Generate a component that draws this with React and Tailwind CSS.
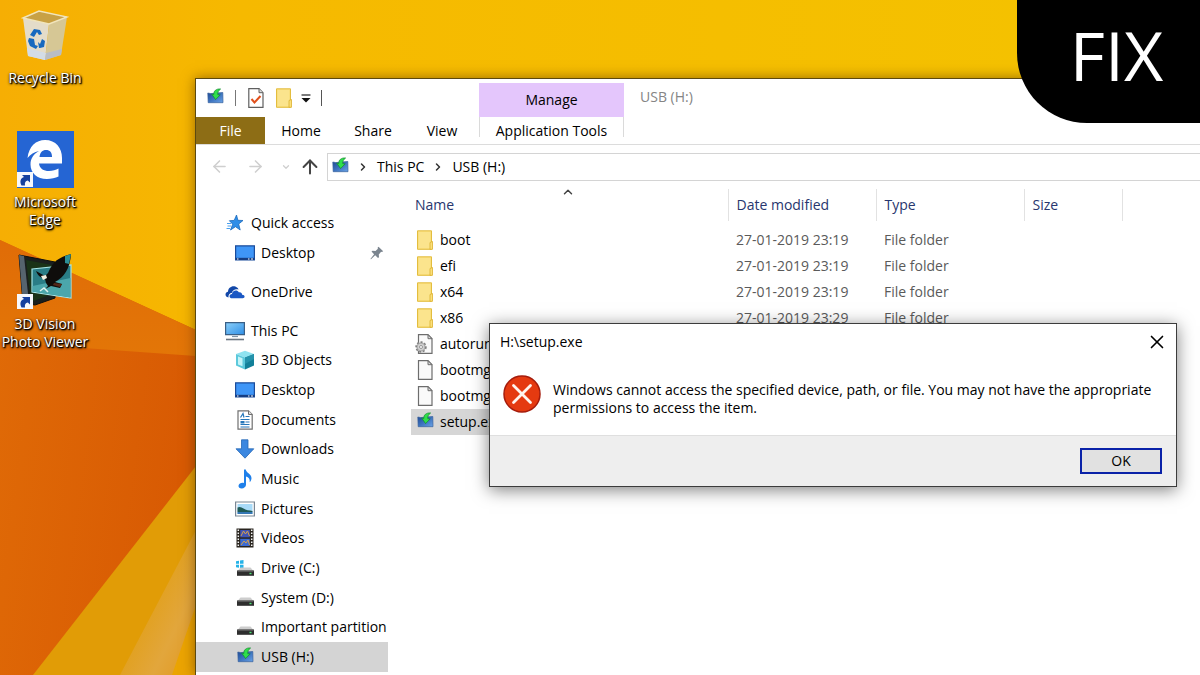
import { X, ArrowLeft, ArrowRight, ArrowUp, ChevronDown, ChevronRight, ChevronUp } from "lucide-react";

/* ---------- Small icons ---------- */

const SetupIcon = () => (
  <svg viewBox="0 0 17 20" className="w-[17px] h-5 shrink-0">
    <defs>
      <linearGradient id="setup" x1="0" y1="0" x2="1" y2="1">
        <stop offset="0" stopColor="#1f4a94" />
        <stop offset=".5" stopColor="#3d73bf" />
        <stop offset="1" stopColor="#6aa3e6" />
      </linearGradient>
    </defs>
    <path d="M.8 5l3 .6 12-1.100.2 10.200H1.200z" fill="url(#setup)" stroke="#3a629c" strokeWidth=".7" />
    <path d="M13.600 1C9 .6 6.600 3 6.800 6.500L4.600 6l4 5.600L13.200 6.800l-2.400-.1C10.600 4.200 11.400 2.600 13.600 1z" fill="#2fdf4b" stroke="#138a2b" strokeWidth=".7" />
  </svg>
);

const FolderIcon = () => (
  <svg viewBox="0 0 17 20" className="w-[17px] h-5 shrink-0">
    <path d="M.5.8h14v18.500H.5z" fill="#f9df7e" stroke="#e3bd3e" />
    <path d="M2 2h11v16H2z" fill="#fbe48d" />
    <path d="M13 12.500l2.500-1v7.800h-2.500z" fill="#fbe07a" stroke="#dcb02e" strokeWidth=".8" />
  </svg>
);

const FileIcon = () => (
  <svg viewBox="0 0 17 20" className="w-[17px] h-5 shrink-0">
    <path d="M1.500.7h9.500l4 4v14.600H1.500z" fill="#fafafa" stroke="#6d6d6d" strokeWidth="1.200" />
    <path d="M11 .7v4h4z" fill="#d8d8d8" stroke="#6d6d6d" />
  </svg>
);

const GearFileIcon = () => (
  <svg viewBox="-2 0 19 20" className="w-[19px] h-5 -ml-0.5 shrink-0">
    <path d="M1.500.7h9.500l4 4v14.600H1.500z" fill="#fafafa" stroke="#6d6d6d" strokeWidth="1.200" />
    <path d="M11 .7v4h4z" fill="#d8d8d8" stroke="#6d6d6d" />
    <circle cx="4" cy="13" r="4.800" fill="#c9c9c9" stroke="#808080" strokeWidth="1.800" strokeDasharray="2 1.600" />
    <circle cx="4" cy="13" r="3.900" fill="#d2d2d2" stroke="#909090" strokeWidth=".6" />
    <circle cx="4" cy="13" r="1.500" fill="#fff" stroke="#777" strokeWidth=".7" />
  </svg>
);

const PropertiesIcon = () => (
  <svg viewBox="0 0 16 20" className="w-4 h-5">
    <path d="M.8.7h10.200l4 4v14.600H.8z" fill="#fff" stroke="#5f5f5f" strokeWidth="1.200" />
    <path d="M11 .7v4h4" fill="#ddd" stroke="#5f5f5f" />
    <path d="M3.500 11l3 3.500 6-6.500" fill="none" stroke="#e0501c" strokeWidth="2" />
  </svg>
);

const StarIcon = () => (
  <svg viewBox="0 0 18 18" className="w-[18px] h-[18px]">
    <path d="M10.500 1l1.400 5.300 5.100.2-4.300 3.500 1.500 6-4.700-3.300-5 3.300 2.200-5.800L3.400 6.700l4.800-.3z" fill="#2f8ee8" stroke="#1a69bd" strokeWidth=".8" />
    <path d="M1 9.500h4M1.500 12h3.500M.5 14.500h3.500" stroke="#4aa0ee" />
  </svg>
);

const DesktopIcon = () => (
  <svg viewBox="0 0 20 16" className="w-5 h-4">
    <path d="M.6.8h18.800v14.200H.6z" fill="#3f96f7" stroke="#1b4c9b" strokeWidth="1.200" />
    <path d="M.6 12.800h18.800v2.200H.6z" fill="#163e83" />
    <path d="M2 14h1.500M13 14h1.500M16 14h2" stroke="#fff" />
  </svg>
);

const OneDriveIcon = () => (
  <svg viewBox="0 0 20 14" className="w-5 h-3.5">
    <path d="M3.500 12.500C-.5 12-.3 7.200 3 6.800 3 2 8.500-.5 12 2.500c1 .8 1.300 1.500 1.500 2-3-1-6 .5-6.500 3.300-3 .4-3.800 3-3.500 4.700z" fill="#1247a8" />
    <path d="M6 13.200c-2.300-.6-1.800-4.200 1-4.300.2-3.700 5.400-4.700 6.800-1.600 2-.5 3.400.7 3.300 2.400 3.400.1 3 3.600.6 3.600z" fill="#1b58c4" />
  </svg>
);

const ComputerIcon = () => (
  <svg viewBox="0 0 20 20" className="w-5 h-5">
    <defs>
      <linearGradient id="screen" x1="0" y1="0" x2="1" y2="1">
        <stop offset="0" stopColor="#8cd0fa" />
        <stop offset="1" stopColor="#2f8fe6" />
      </linearGradient>
    </defs>
    <path d="M.6 1.600h18.800v12H.6z" fill="url(#screen)" stroke="#3a5f86" strokeWidth="1.200" />
    <path d="M7 15.500h6" stroke="#7d93a8" strokeWidth="1.200" />
    <path d="M1 18.500h18" stroke="#6c7782" strokeWidth="1.600" />
  </svg>
);

const CubeIcon = () => (
  <svg viewBox="0 0 20 20" className="w-5 h-5">
    <path d="M10 .8l9 3.200-9 3.500L1 4z" fill="#8fe3f0" />
    <path d="M1 4l9 3.500v12L1 15.500z" fill="#5cc9dc" />
    <path d="M3 6.500l4.500 1.800v8L3 14.500z" fill="#c5f4f8" />
    <path d="M10 7.500L19 4v11.500l-9 4z" fill="#128099" />
    <path d="M10 7.500L19 4v5l-9 5z" fill="#2492ab" />
  </svg>
);

const DocumentIcon = () => (
  <svg viewBox="0 0 18 20" className="w-[18px] h-5">
    <path d="M2 .8h10.500l3.700 3.700v14.700H2z" fill="#fff" stroke="#707070" strokeWidth="1.200" />
    <path d="M12.500.8v3.700h3.700" fill="#ddd" stroke="#707070" />
    <path d="M4.500 7.500L7 3.500l1 4M9.500 6.500h4M4.500 9.500h9M9.500 12h4M4.500 14.500h9M4.500 17h9" stroke="#2677ba" strokeWidth="1.200" fill="none" />
    <path d="M4.500 11h4v2.500h-4z" fill="#2677ba" />
  </svg>
);

const DownloadIcon = () => (
  <svg viewBox="0 0 20 20" className="w-5 h-5">
    <path d="M6.500 .8h6.500v9h5.800L10 19.200 1 9.800h5.500z" fill="#3b87e0" stroke="#2467b5" strokeWidth=".8" />
  </svg>
);

const MusicIcon = () => (
  <svg viewBox="0 0 18 20" className="w-[18px] h-5">
    <path d="M8 .5h1.800c.4 3.500 5.800 4.500 5.700 8.700 0 1.500-.8 3-1.800 4 .5-4-2-5.200-3.700-5.700v8.300c0 2-2 3.700-4.300 3.700-2 0-3.400-1.200-3.200-2.700.3-2.300 3-3.600 5.500-2.900z" fill="#1f80ea" />
  </svg>
);

const PictureIcon = () => (
  <svg viewBox="0 0 20 16" className="w-5 h-4">
    <path d="M.6 1h18.800v14H.6z" fill="#fff" stroke="#7a8794" strokeWidth="1.200" />
    <path d="M2.500 3h15v10h-15z" fill="#a9dbf8" />
    <path d="M2.500 6.500c2-1 4-.5 6 1s6 2 9 2.500v1h-15z" fill="#1f5a55" />
    <path d="M2.500 11h15v2h-15z" fill="#3577b4" />
  </svg>
);

const VideoIcon = () => (
  <svg viewBox="0 0 18 20" className="w-[18px] h-5">
    <path d="M.5.5h17v19H.5z" fill="#29241e" />
    <path d="M4.200 2h9.600v7.300H4.200z" fill="#4054b5" />
    <path d="M4.200 10.800h9.600V18H4.200z" fill="#3c6bd2" />
    <path d="M5 8l2.500-5 2 3 2-3 2 5M5 17l3-4 2 2 2-3 1.500 5" stroke="#d8a04a" fill="none" />
    <path d="M2.300 1.500v17.500M15.700 1.500v17.500" stroke="#f5f5f5" strokeWidth="1.500" strokeDasharray="1.500 1.500" />
  </svg>
);

const DriveIcon = ({ windows }) => (
  <svg viewBox="0 0 20 18" className="w-5 h-[18px]">
    {windows && <path d="M1 2.200l3-.5v3H1zM5 1.500L8.500 1v3.700H5zM1 5.800h3v3l-3-.5zM5 5.800h3.500v3.500L5 8.900z" fill="#25b3e8" />}
    <path d="M5.500 8.500h10L18.500 12h-16z" fill="#cdcdcd" />
    <path d="M2 11.500h17v5.300H2z" fill="#2e2e2e" />
    <path d="M2.500 12.200h16" stroke="#666" />
    <path d="M14.500 14.500h2" stroke="#4ce477" strokeWidth="1.400" />
  </svg>
);

const PinIcon = () => (
  <svg viewBox="0 0 14 14" className="w-3.5 h-3.5">
    <path d="M8.500.8l4.700 4.500-1.300.7-.8-.2-2.300 2.600.2 2.800-1 .9-2.800-2.800L1 13.300l-.6-.4 3.700-4.700L1.500 5.600l1-.9 3 .2 2.400-2.200-.3-1z" fill="#7b858f" />
  </svg>
);

/* ---------- Desktop icons ---------- */

const ShortcutArrow = () => (
  <g>
    <path d="M0 41h16v15H0z" fill="#f6f8fc" />
    <path d="M4.500 54.500c-2-4 -1-7.500 2.500-8.500L5 44h8v7.500l-2.200-2C8.500 50 7.500 51.500 8 54.500z" fill="#14409f" />
  </g>
);

const RecycleBinIcon = () => (
  <svg viewBox="0 0 48 54" className="w-12 h-[54px]">
    <path d="M2 8l26 6-4 36L7 46z" fill="#e4dcc9" />
    <path d="M28 14l18-7-6 38-16 5z" fill="#d6c795" />
    <path d="M6 38l19 5-1 7-17-4z" fill="#d3dce6" />
    <path d="M25 43l16-4-1 6-16 5z" fill="#b9bdc4" />
    <path d="M2 8l16-7 28 6-18 7z" fill="#c8a145" stroke="#f1e5bd" strokeWidth="1.500" />
    <path d="M9 25l4-6 6 1 2 4-3 1-2-3-3 5zM8 28l5 1 1 6 3 1-2 3-6-3-2-5zM18 38l-1-6 2 2 2-5 3 2-1 6-4 1z" fill="#1769bf" />
  </svg>
);

const EdgeIcon = () => (
  <svg viewBox="0 0 57 57" className="w-[57px] h-[57px]">
    <path d="M0 0h57v57H0z" fill="#2565d3" />
    <path d="M10.500 27C12 15 19 9 28 9c11 0 17 8 17 18v5.500H22c.5 5 4.500 7.500 10 7.500 3.500 0 7-1 9.500-2.500v8C38.500 47 34 48 30 48c-10 0-16.500-6-16.500-14.500 0-6 3-10.500 8.500-13.500-5 1-8.500 3.500-11.500 7zM22.500 26H35c0-4.500-2-7-6-7-3.700 0-6 2.500-6.500 7z" fill="#fff" />
    <ShortcutArrow />
  </svg>
);

const PhotoViewerIcon = () => (
  <svg viewBox="0 0 57 57" className="w-[57px] h-[57px]">
    <path d="M2 2l36 7v36L18 52 6 50z" fill="#1a1f1e" stroke="#0d0f0f" />
    <path d="M2 2l5 1 5 47-6 1z" fill="#56646e" />
    <path d="M9 7l26 5v29l-21 8z" fill="#1a3318" />
    <path d="M15 16l39-4v33l-39-6z" fill="#2a7d86" stroke="#a5e4e6" strokeWidth="1.200" />
    <path d="M15.500 33l38-8v19.500l-38-6z" fill="#4ba6ab" />
    <path d="M54 1c-8 2-14 5-18 10-3 4-4 7-5 9l-3 3-9-5c2 5 5 7 9 8l1 4 2 3-3 3 6-3 9 2 2-4-7-2c9-5 15-13 16-28z" fill="#0f0d0b" />
    <path d="M48 3l6-2-2 10-4-1z" fill="#2c8f95" />
    <path d="M37 30l8 1-2 3-7-2z" fill="#54281a" />
    <path d="M24 23l5-1 1 3-4 2z" fill="#f3efe0" />
    <path d="M23 38l4-3 4 4" fill="none" stroke="#dff2ef" strokeWidth="1.500" />
    <ShortcutArrow />
  </svg>
);

const desktopItems = [
  { lines: ["Recycle Bin"], Icon: RecycleBinIcon, spacing: "mt-2.5" },
  { lines: ["Microsoft", "Edge"], Icon: EdgeIcon, spacing: "mt-11" },
  { lines: ["3D Vision", "Photo Viewer"], Icon: PhotoViewerIcon, spacing: "mt-6" },
];

const navGroups = [
  {
    name: "Quick access",
    Icon: StarIcon,
    children: [{ name: "Desktop", Icon: DesktopIcon, pinned: true }],
    height: "h-[60px]",
  },
  { name: "OneDrive", Icon: OneDriveIcon, children: [], height: "h-7" },
  {
    name: "This PC",
    Icon: ComputerIcon,
    height: "h-[356px]",
    children: [
      { name: "3D Objects", Icon: CubeIcon },
      { name: "Desktop", Icon: DesktopIcon },
      { name: "Documents", Icon: DocumentIcon },
      { name: "Downloads", Icon: DownloadIcon },
      { name: "Music", Icon: MusicIcon },
      { name: "Pictures", Icon: PictureIcon },
      { name: "Videos", Icon: VideoIcon },
      { name: "Drive (C:)", Icon: () => <DriveIcon windows /> },
      { name: "System (D:)", Icon: DriveIcon },
      { name: "Important partition", Icon: DriveIcon },
      { name: "USB (H:)", Icon: SetupIcon, selected: true },
    ],
  },
];

const files = [
  { name: "boot", Icon: FolderIcon, date: "27-01-2019 23:19", type: "File folder" },
  { name: "efi", Icon: FolderIcon, date: "27-01-2019 23:19", type: "File folder" },
  { name: "x64", Icon: FolderIcon, date: "27-01-2019 23:19", type: "File folder" },
  { name: "x86", Icon: FolderIcon, date: "27-01-2019 23:29", type: "File folder" },
  { name: "autorun", Icon: GearFileIcon },
  { name: "bootmgr", Icon: FileIcon },
  { name: "bootmgr", Icon: FileIcon },
  { name: "setup.exe", Icon: SetupIcon, selected: true },
];

const Wallpaper = () => (
  <svg viewBox="0 0 1200 675" preserveAspectRatio="xMinYMin slice" className="absolute inset-0 w-full h-full" aria-hidden="true">
    <defs>
      <linearGradient id="sky" x1="0" y1="0" x2="1" y2="0">
        <stop offset="0" stopColor="#f6ae04" />
        <stop offset=".2" stopColor="#f6b900" />
        <stop offset="1" stopColor="#f4c300" />
      </linearGradient>
      <linearGradient id="orange" x1="0" y1="0" x2="1" y2=".3">
        <stop offset="0" stopColor="#e06b07" />
        <stop offset="1" stopColor="#d85a03" />
      </linearGradient>
      <linearGradient id="facet" gradientUnits="userSpaceOnUse" x1="0" y1="240" x2="0" y2="356">
        <stop offset="0" stopColor="#e06c07" />
        <stop offset="1" stopColor="#e37607" />
      </linearGradient>
      <linearGradient id="glow" gradientUnits="userSpaceOnUse" x1="120" y1="600" x2="190" y2="635">
        <stop offset="0" stopColor="#e19c06" />
        <stop offset=".8" stopColor="#e2a63c" />
        <stop offset="1" stopColor="#e2a030" />
      </linearGradient>
    </defs>
    <rect width="1200" height="675" fill="url(#sky)" />
    <path d="M0 240L196 330V675H0z" fill="url(#orange)" />
    <path d="M0 240L196 330V356L0 342z" fill="url(#facet)" />
    <path d="M196 466V675H33z" fill="#e19c06" />
    <path d="M196 530V675H120z" fill="url(#glow)" />
    <path d="M196 605V675H172z" fill="#eba402" />
  </svg>
);

const DesktopIcons = () => (
  <div className="flex flex-col items-center w-[90px]">
    {desktopItems.map(({ lines, Icon, spacing }) => (
      <button key={lines[0]} className={`flex flex-col items-center text-sm leading-[18px] text-white whitespace-nowrap [text-shadow:1px_1px_2px_#000,0_1px_3px_#000,1px_1px_1px_#000] ${spacing}`}>
        <Icon />
        <span className="flex flex-col mt-[5px]">
          {lines.map((line) => <span key={line}>{line}</span>)}
        </span>
      </button>
    ))}
  </div>
);

const Ribbon = () => (
  <header className="border-b border-[#dcdcdc]">
    <div className="flex h-[38px]">
      <div className="flex items-center w-[283px] pl-[11px]">
        <SetupIcon />
        <span className="w-px h-4 ml-[11px] bg-[#777]" />
        <button aria-label="Properties" className="ml-3"><PropertiesIcon /></button>
        <button aria-label="New folder" className="ml-3"><FolderIcon /></button>
        <button aria-label="Customize toolbar" className="ml-2">
          <svg viewBox="0 0 10 10" className="w-2.5 h-2.5">
            <path d="M.5 2h9" stroke="#222" strokeWidth="1.200" />
            <path d="M.5 5h9L5 9.500z" fill="#111" />
          </svg>
        </button>
        <span className="w-px h-4 ml-2.5 bg-[#555]" />
      </div>
      <div className="flex items-center justify-center w-[145px] mt-1 bg-[#e4c6fc]">Manage</div>
      <h1 className="pt-2 pl-4 text-[#858585]">USB (H:)</h1>
    </div>
    <nav className="flex h-[27px]">
      <button className="w-[69px] bg-[#8d6d15] text-white">File</button>
      <button className="w-[72px]">Home</button>
      <button className="w-[72px]">Share</button>
      <button className="w-[66px] mr-1">View</button>
      <button className="w-[145px] h-5 pt-1 border-x border-[#dadada]">Application Tools</button>
    </nav>
  </header>
);

const AddressBar = () => (
  <div className="flex items-center h-[43px]">
    <div className="flex items-center w-[131px] pl-[14px] text-[#cfcfcf]">
      <button aria-label="Back"><ArrowLeft size={19} strokeWidth={2} /></button>
      <button aria-label="Forward" className="ml-[17px]"><ArrowRight size={19} strokeWidth={2} /></button>
      <button aria-label="Recent locations" className="ml-4"><ChevronDown size={10} strokeWidth={3} /></button>
      <button aria-label="Up" className="ml-2 text-[#444]"><ArrowUp size={22} strokeWidth={2.200} /></button>
    </div>
    <div className="flex flex-1 items-center h-7 border border-r-0 border-[#d4d4d4] pl-1 text-black">
      <SetupIcon />
      <ChevronRight size={12} strokeWidth={3} className="ml-2 text-[#333]" />
      <button className="ml-2">This PC</button>
      <ChevronRight size={12} strokeWidth={3} className="ml-2 text-[#333]" />
      <button className="ml-2">USB (H:)</button>
    </div>
  </div>
);

const NavItem = ({ name, Icon, pinned, selected, nested }) => (
  <a href="#" className={`flex items-center gap-1.5 whitespace-nowrap ${nested ? "pl-[39px]" : "pl-[29px]"} ${selected ? "bg-[#d4d4d4]" : ""}`}>
    <span className="flex justify-center w-5 shrink-0"><Icon /></span>
    {name}
    {pinned && <span className="ml-auto mr-1"><PinIcon /></span>}
  </a>
);

const Sidebar = () => (
  <aside className="w-[192px] shrink-0 pt-5 flex flex-col gap-2.5">
    {navGroups.map(({ children, height, ...item }) => (
      <div key={item.name} className={`grid auto-rows-fr ${height}`}>
        <NavItem {...item} />
        {children.map((child) => <NavItem key={child.name} {...child} nested />)}
      </div>
    ))}
  </aside>
);

const FileList = () => (
  <main className="flex-1 min-w-0 pl-[23px] pt-px">
    <table className="w-[711px] table-fixed border-collapse text-left text-[#5a5a5a]">
      <thead>
        <tr className="h-8 text-[#28366e]">
          <th className="relative w-[317px] pl-1 font-normal">
            Name
            <ChevronUp size={14} strokeWidth={2.500} className="absolute top-[-4px] left-[150px] text-[#444]" />
          </th>
          <th className="w-[148px] border-l border-[#e2e2e2] pl-2 font-normal">Date modified</th>
          <th className="w-[148px] border-l border-[#e2e2e2] pl-2 font-normal">Type</th>
          <th className="w-[98px] border-x border-[#e2e2e2] pl-2 font-normal">Size</th>
        </tr>
        <tr className="h-1.5" />
      </thead>
      <tbody>
        {files.map(({ name, Icon, date, type, selected }, i) => (
          <tr key={i} className={`h-[26px] ${selected ? "bg-[#d6d6d6]" : ""}`}>
            <td className="pl-1.5">
              <span className="flex items-center gap-1.5 text-black"><Icon />{name}</span>
            </td>
            <td className="pl-2">{date}</td>
            <td className="pl-2">{type}</td>
            <td />
          </tr>
        ))}
      </tbody>
    </table>
  </main>
);

const ErrorDialog = () => (
  <div role="dialog" aria-labelledby="dialog-title" className="absolute top-[323px] left-[489px] right-[23px] border border-[#3c3c3c] bg-white shadow-[0_3px_16px_rgba(0,0,0,0.5)]">
    <div className="flex items-center justify-between h-9 pl-2.5 pr-2">
      <h2 id="dialog-title">H:\setup.exe</h2>
      <button aria-label="Close"><X size={22} strokeWidth={1.800} /></button>
    </div>
    <div className="flex gap-3 pt-[15px] pl-[13px] pb-[22px]">
      <svg viewBox="0 0 38 38" className="w-[38px] h-[38px] shrink-0">
        <circle cx="19" cy="19" r="18" fill="#e53a10" stroke="#a51c0c" strokeWidth="1.500" />
        <path d="M10.500 10.500l17 17m0-17l-17 17" stroke="#fff5ee" strokeWidth="2.800" strokeLinecap="round" />
      </svg>
      <p className="h-9 pt-1.5 leading-[18px]">
        Windows cannot access the specified device, path, or file. You may not have the appropriate
        <br />
        permissions to access the item.
      </p>
    </div>
    <div className="flex justify-end border-t border-[#dfdfdf] bg-[#eee] py-3 pr-3.5">
      <button className="w-[82px] h-[26px] border-2 border-[#0a22a8] bg-[#e1e1e1]">OK</button>
    </div>
  </div>
);

const App = () => (
  <div className="relative flex min-h-screen overflow-hidden font-['Open_Sans','Noto_Sans',sans-serif] text-sm text-black">
    <Wallpaper />
    <div className="relative w-[195px] shrink-0">
      <DesktopIcons />
    </div>
    <div className="relative flex-1 min-w-0 mt-[78px] border-t border-l border-[#5c4a10] bg-white shadow-[0_0_12px_rgba(90,50,0,0.6)]">
      <Ribbon />
      <AddressBar />
      <div className="flex">
        <Sidebar />
        <FileList />
      </div>
    </div>
    <ErrorDialog />
    <div className="absolute top-0 right-0 flex items-center justify-center w-[183px] h-[123px] pl-4 pb-3.5 rounded-bl-[70px] bg-black text-[68px] text-white">
      FIX
    </div>
  </div>
);

export default App;
